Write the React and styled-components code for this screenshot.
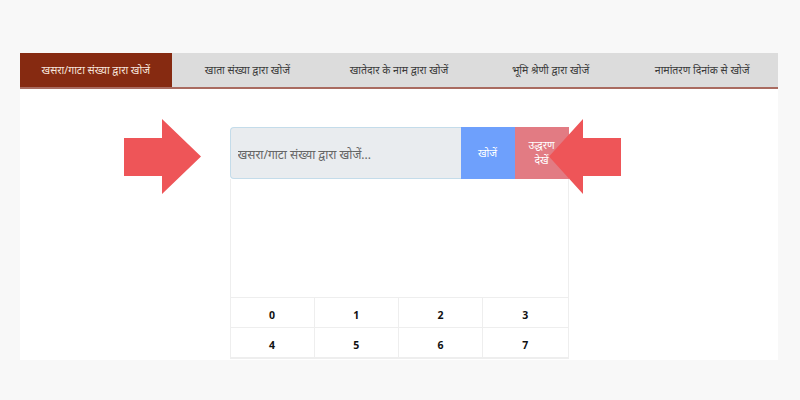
import React from 'react'
import styled, { createGlobalStyle } from 'styled-components'

const GlobalStyle = createGlobalStyle`
  body {
    margin: 0;
    background: #f8f8f8;
    font-family: "Noto Sans", "Noto Sans Devanagari", sans-serif;
  }
`

const Page = styled.div`
  padding: 53px 22px 0 20px;
  height: 400px;
  box-sizing: border-box;
`

const Card = styled.div`
  background: #fff;
  height: 307px;
  overflow: hidden;
`

const TabBar = styled.div`
  display: flex;
  height: 34px;
  background: #dcdcdc;
  border-bottom: 2px solid #a96b60;
`

const Tab = styled.div`
  flex: 1;
  display: flex;
  align-items: center;
  justify-content: center;
  font-size: 10.5px;
  color: ${(p) => (p.active ? '#f6e4dc' : '#3a3a3a')};
  background: ${(p) => (p.active ? '#862a11' : 'transparent')};
  white-space: nowrap;
`

const Content = styled.div`
  display: flex;
  justify-content: center;
  padding-top: 38px;
`

const SearchArea = styled.div`
  position: relative;
  width: 339px;
`

const InputGroup = styled.div`
  display: flex;
  height: 52px;
`

const SearchInput = styled.input`
  flex: 1;
  min-width: 0;
  border: 1px solid #c4dcea;
  border-right: none;
  border-radius: 4px 0 0 4px;
  background: #e9ecef;
  padding: 2px 7px 0;
  font-family: inherit;
  font-size: 12px;
  color: #555;
  outline: none;

  &::placeholder {
    color: #666;
  }
`

const ActionButton = styled.div`
  flex: 0 0 54px;
  display: flex;
  flex-direction: column;
  align-items: center;
  justify-content: center;
  background: ${(p) => p.bg};
  color: #fff;
  font-size: 10.5px;
  line-height: 15px;
`

const Results = styled.div`
  border: 1px solid #eee;
  border-top: none;
  display: flex;
  flex-direction: column;
`

const Empty = styled.div`
  flex: 0 0 118px;
`

const NumberGrid = styled.div`
  display: grid;
  grid-template-columns: repeat(4, 1fr);
  border-top: 1px solid #eee;
`

const NumberCell = styled.div`
  height: 30px;
  padding-top: 4px;
  box-sizing: border-box;
  display: flex;
  align-items: center;
  justify-content: center;
  font-family: "Open Sans", sans-serif;
  font-weight: 700;
  font-size: 10.5px;
  color: #111;
  border-bottom: 1px solid #eee;
  border-right: ${(p) => (p.last ? 'none' : '1px solid #eee')};
`

const Arrow = styled.svg`
  position: absolute;
  top: -8px;
  left: ${(p) => p.left}px;
  height: 75px;
`

const tabs = [
  'खसरा/गाटा संख्या द्वारा खोजें',
  'खाता संख्या द्वारा खोजें',
  'खातेदार के नाम द्वारा खोजें',
  'भूमि श्रेणी द्वारा खोजें',
  'नामांतरण दिनांक से खोजें',
]

const numbers = ['0', '1', '2', '3', '4', '5', '6', '7']

const App = () => {
  return (
    <>
      <GlobalStyle />
      <Page>
        <Card>
          <TabBar>
            {tabs.map((t, i) => (
              <Tab key={t} active={i === 0}>
                {t}
              </Tab>
            ))}
          </TabBar>
          <Content>
            <SearchArea>
              <InputGroup>
                <SearchInput placeholder="खसरा/गाटा संख्या द्वारा खोजें..." />
                <ActionButton bg="#6ea0fc">खोजें</ActionButton>
                <ActionButton bg="#e27b83">
                  <span>उद्धरण</span>
                  <span>देखें</span>
                </ActionButton>
              </InputGroup>
              <Results>
                <Empty />
                <NumberGrid>
                  {numbers.map((n, i) => (
                    <NumberCell key={n} last={i % 4 === 3}>
                      {n}
                    </NumberCell>
                  ))}
                </NumberGrid>
              </Results>
              {/* pointer arrows over the search box */}
              <Arrow left={-106} width="77" viewBox="0 0 77 75">
                <polygon points="0,19 38,19 38,0 77,37.5 38,75 38,57 0,57" fill="#ee5558" />
              </Arrow>
              <Arrow left={319} width="72" viewBox="0 0 72 75">
                <polygon points="72,19 34,19 34,0 0,37.5 34,75 34,57 72,57" fill="#ee5558" />
              </Arrow>
            </SearchArea>
          </Content>
        </Card>
      </Page>
    </>
  )
}

export default App
